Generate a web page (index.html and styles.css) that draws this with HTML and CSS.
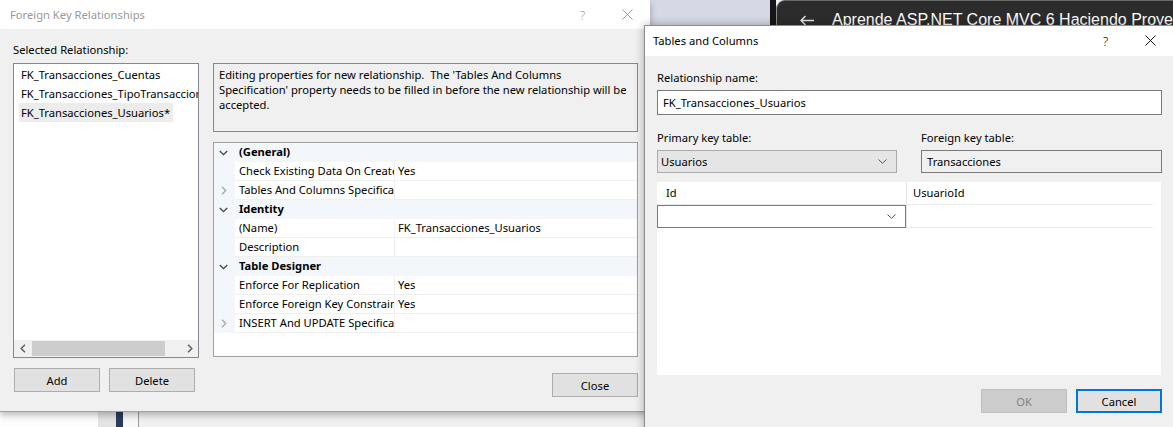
FILE: index.html
```html
<!DOCTYPE html>
<html>
<head>
<meta charset="utf-8">
<title>Foreign Key Relationships</title>
<link rel="stylesheet" href="styles.css">
</head>
<body>
<div class="desktop">
  <div class="top-band">
    <div class="tb-covered"></div>
    <div class="tb-lav"></div>
    <div class="tb-black"></div>
    <div class="tb-panel">
      <svg class="back-arrow" width="14" height="11" viewBox="0 0 14 11"><path d="M1 5.5H14M5.5 1L1 5.5L5.5 10" fill="none" stroke="#e6e6e6" stroke-width="1.4"/></svg>
      <span class="course">Aprende ASP.NET Core MVC 6 Haciendo Proyectos</span>
    </div>
  </div>
  <div class="bottom-band">
    <div class="bb-a"></div><div class="bb-b"></div><div class="bb-c"></div><div class="bb-d"></div><div class="bb-e"></div><div class="bb-f"></div>
  </div>

  <div class="dlg dlg-fk">
    <div class="titlebar">
      <div class="title">Foreign Key Relationships</div>
      <div class="tbtn help">?</div>
      <div class="tbtn"><svg width="11" height="11" viewBox="0 0 11 11"><path d="M0.5 0.5L10.5 10.5M10.5 0.5L0.5 10.5" stroke="#9a9a9a" stroke-width="1"/></svg></div>
    </div>
    <div class="fk-body">
      <div class="col left-col">
        <div class="label">Selected Relationship:</div>
        <div class="listbox">
          <div class="list-items">
            <div class="list-item">FK_Transacciones_Cuentas</div>
            <div class="list-item">FK_Transacciones_TipoTransacciones</div>
            <div class="list-item sel">FK_Transacciones_Usuarios*</div>
          </div>
          <div class="hscroll">
            <div class="sb-arrow"><svg width="6" height="9" viewBox="0 0 6 9"><path d="M5 0.8L1.2 4.5L5 8.2" fill="none" stroke="#606060" stroke-width="1.5"/></svg></div>
            <div class="sb-track"><div class="sb-thumb"></div></div>
            <div class="sb-arrow"><svg width="6" height="9" viewBox="0 0 6 9"><path d="M1 0.8L4.8 4.5L1 8.2" fill="none" stroke="#606060" stroke-width="1.5"/></svg></div>
          </div>
        </div>
        <div class="btn-row">
          <button class="btn">Add</button>
          <button class="btn">Delete</button>
        </div>
      </div>
      <div class="col right-col">
        <div class="desc">Editing properties for new relationship.&nbsp; The 'Tables And Columns<br>Specification' property needs to be filled in before the new relationship will be<br>accepted.</div>
        <div class="pgrid">
          <div class="prow cat">
            <div class="gut"><svg width="9" height="6" viewBox="0 0 9 6"><path d="M0.8 1L4.5 4.7L8.2 1" fill="none" stroke="#444" stroke-width="1.3"/></svg></div>
            <div class="cat-name">(General)</div>
          </div>
          <div class="prow">
            <div class="gut"></div>
            <div class="pname">Check Existing Data On Create Or Re-Enabling</div>
            <div class="pval">Yes</div>
          </div>
          <div class="prow">
            <div class="gut"><svg width="6" height="9" viewBox="0 0 6 9"><path d="M1 0.8L4.7 4.5L1 8.2" fill="none" stroke="#a9a9a9" stroke-width="1.3"/></svg></div>
            <div class="pname">Tables And Columns Specification</div>
            <div class="pval"></div>
          </div>
          <div class="prow cat">
            <div class="gut"><svg width="9" height="6" viewBox="0 0 9 6"><path d="M0.8 1L4.5 4.7L8.2 1" fill="none" stroke="#444" stroke-width="1.3"/></svg></div>
            <div class="cat-name">Identity</div>
          </div>
          <div class="prow">
            <div class="gut"></div>
            <div class="pname">(Name)</div>
            <div class="pval">FK_Transacciones_Usuarios</div>
          </div>
          <div class="prow">
            <div class="gut"></div>
            <div class="pname">Description</div>
            <div class="pval"></div>
          </div>
          <div class="prow cat">
            <div class="gut"><svg width="9" height="6" viewBox="0 0 9 6"><path d="M0.8 1L4.5 4.7L8.2 1" fill="none" stroke="#444" stroke-width="1.3"/></svg></div>
            <div class="cat-name">Table Designer</div>
          </div>
          <div class="prow">
            <div class="gut"></div>
            <div class="pname">Enforce For Replication</div>
            <div class="pval">Yes</div>
          </div>
          <div class="prow">
            <div class="gut"></div>
            <div class="pname">Enforce Foreign Key Constraint</div>
            <div class="pval">Yes</div>
          </div>
          <div class="prow">
            <div class="gut"><svg width="6" height="9" viewBox="0 0 6 9"><path d="M1 0.8L4.7 4.5L1 8.2" fill="none" stroke="#a9a9a9" stroke-width="1.3"/></svg></div>
            <div class="pname">INSERT And UPDATE Specification</div>
            <div class="pval"></div>
          </div>
        </div>
        <div class="close-row">
          <button class="btn">Close</button>
        </div>
      </div>
    </div>
  </div>

  <div class="dlg dlg-tc">
    <div class="titlebar">
      <div class="title">Tables and Columns</div>
      <div class="tbtn help">?</div>
      <div class="tbtn"><svg width="11" height="11" viewBox="0 0 11 11"><path d="M0.5 0.5L10.5 10.5M10.5 0.5L0.5 10.5" stroke="#111" stroke-width="1"/></svg></div>
    </div>
    <div class="tc-body">
      <div class="label lbl-gap">Relationship name:</div>
      <div class="textbox">FK_Transacciones_Usuarios</div>
      <div class="pk-row">
        <div class="col">
          <div class="label lbl-gap">Primary key table:</div>
          <div class="combo"><span>Usuarios</span><svg width="9" height="5" viewBox="0 0 9 5"><path d="M0.5 0.5L4.5 4.3L8.5 0.5" fill="none" stroke="#555" stroke-width="1"/></svg></div>
        </div>
        <div class="col">
          <div class="label lbl-gap">Foreign key table:</div>
          <div class="ro-box">Transacciones</div>
        </div>
      </div>
      <div class="cgrid">
        <div class="cg-row cg-head">
          <div class="cg-cell first">Id</div>
          <div class="cg-cell second">UsuarioId</div>
        </div>
        <div class="cg-row">
          <div class="cg-cell first cg-combo"><svg width="9" height="5" viewBox="0 0 9 5"><path d="M0.5 0.5L4.5 4.3L8.5 0.5" fill="none" stroke="#555" stroke-width="1"/></svg></div>
          <div class="cg-cell second"></div>
        </div>
      </div>
      <div class="tc-buttons">
        <button class="btn disabled">OK</button>
        <button class="btn default">Cancel</button>
      </div>
    </div>
  </div>
</div>
</body>
</html>
```

FILE: styles.css
```css
* { box-sizing: border-box; }
html, body { margin: 0; padding: 0; }
body {
  width: 1173px;
  height: 427px;
  overflow: hidden;
  font-family: "Noto Sans", "Open Sans", sans-serif;
  font-size: 11.2px;
  color: #000;
}

.desktop {
  position: relative;
  width: 1173px;
  height: 427px;
  background: #f0f0f0;
  display: flex;
  flex-direction: column;
  justify-content: space-between;
  overflow: hidden;
}

/* background behind the dialogs */
.top-band { height: 26px; display: flex; }
.tb-covered { width: 650px; background: #fff; }
.tb-lav { width: 120px; background: #d6d9e5; }
.tb-black { width: 6px; background: #161616; }
.tb-panel {
  flex: 1;
  background: #2c2c2c;
  border-top-left-radius: 9px;
  border-left: 1px solid #8a8a8a;
  border-top: 1px solid #6a6a6a;
  display: flex;
  align-items: flex-start;
  padding: 10px 0 0 23px;
  overflow: hidden;
  white-space: nowrap;
  color: #fff;
  font-family: "Liberation Sans", Arial, sans-serif;
  font-size: 16px;
  line-height: 18px;
}
.back-arrow { margin-top: 4px; flex: none; }
.course { margin-left: 18px; }

.bottom-band { height: 15px; display: flex; }
.bb-a { width: 98px; background: #fdfdfd; }
.bb-b { width: 18px; background: #e4e4e4; }
.bb-c { width: 7px; background: #2a3b5d; }
.bb-d { width: 15px; background: #f8f8f8; }
.bb-e { width: 1px; background: #9a9a9a; }
.bb-f { flex: 1; background: #f0f0f0; }

/* dialogs */
.dlg { position: absolute; background: #f0f0f0; }
.titlebar { display: flex; align-items: center; background: #fff; }
.title { flex: 1; white-space: nowrap; }
.tbtn {
  width: 45px;
  height: 100%;
  display: flex;
  align-items: center;
  justify-content: center;
  font-size: 13px;
}
.help { font-weight: 300; }

.dlg-fk {
  left: 0;
  top: 0;
  width: 650px;
  height: 412px;
  border-bottom: 1px solid #a0a0a0;
  box-shadow: 0 3px 7px rgba(0, 0, 0, 0.28);
}
.dlg-fk .titlebar { height: 29px; padding-left: 10px; color: #999; }
.dlg-fk .tbtn { color: #9a9a9a; }

.fk-body {
  display: grid;
  grid-template-columns: 186px 425px;
  column-gap: 14px;
  padding: 13px 0 0 13px;
}
.col { display: flex; flex-direction: column; }
.label { height: 15px; line-height: 15px; white-space: nowrap; }
.left-col .label { margin-bottom: 6px; }

.listbox {
  height: 295px;
  border: 1px solid #828790;
  background: #fff;
  display: flex;
  flex-direction: column;
}
.list-items { flex: 1; padding: 1px 0 0 5px; overflow: hidden; }
.list-item {
  height: 19px;
  line-height: 19px;
  white-space: nowrap;
  padding: 0 3px 0 2px;
  width: max-content;
}
.list-item.sel { background: #ececec; }

.hscroll { height: 17px; background: #f0f0f0; display: flex; }
.sb-arrow { width: 17px; height: 17px; display: flex; align-items: center; justify-content: center; }
.sb-track { flex: 1; padding: 1px 0; display: flex; }
.sb-thumb { width: 133px; margin-left: 1px; background: #cdcdcd; }

.btn-row { margin-top: 10px; padding-left: 1px; display: flex; gap: 9px; }
.btn {
  width: 86px;
  height: 24px;
  padding: 0;
  margin: 0;
  background: #e1e1e1;
  border: 1px solid #adadad;
  font: inherit;
  color: #000;
  display: flex;
  align-items: center;
  justify-content: center;
}

.right-col { padding-top: 21px; }
.desc {
  height: 69px;
  border: 1px solid #828790;
  background: #f0f0f0;
  padding: 3px 5px;
  line-height: 15px;
  white-space: nowrap;
  overflow: hidden;
}
.pgrid {
  margin-top: 10px;
  height: 215px;
  border: 1px solid #a0a0a0;
  background: #fff;
}
.prow {
  display: grid;
  grid-template-columns: 21px 160px 1fr;
  height: 19px;
  line-height: 18px;
}
.gut {
  background: #f3f6fb;
  display: flex;
  align-items: center;
  justify-content: center;
  padding-right: 2px;
}
.pname, .pval {
  white-space: nowrap;
  overflow: hidden;
  border-bottom: 1px solid #f0f0f0;
}
.pname { padding-left: 4px; border-right: 1px solid #f0f0f0; }
.pval { padding-left: 3px; }
.prow.cat { background: #f3f6fb; }
.cat-name { grid-column: 2 / 4; padding-left: 4px; font-weight: 700; }

.close-row { margin-top: 16px; display: flex; justify-content: flex-end; }

/* tables and columns dialog */
.dlg-tc {
  left: 644px;
  top: 25px;
  width: 530px;
  height: 410px;
  border: 1px solid #8c8c8c;
  border-bottom: 0;
  box-shadow: 0 0 9px rgba(0, 0, 0, 0.3);
}
.dlg-tc .titlebar { height: 30px; padding-left: 8px; padding-bottom: 1px; }
.tc-body { padding: 14px 11px 0 12px; display: flex; flex-direction: column; }
.lbl-gap { margin-bottom: 5px; }
.textbox {
  height: 25px;
  border: 1px solid #7a7a7a;
  background: #fff;
  padding-left: 5px;
  line-height: 23px;
}
.pk-row {
  margin-top: 15px;
  display: grid;
  grid-template-columns: 240px 1fr;
  column-gap: 24px;
}
.combo {
  height: 23px;
  background: #e5e5e5;
  border: 1px solid #acacac;
  padding: 0 9px 0 3px;
  display: flex;
  align-items: center;
  justify-content: space-between;
}
.ro-box {
  height: 23px;
  background: #f0f0f0;
  border: 1px solid #7a7a7a;
  padding-left: 5px;
  line-height: 21px;
}
.cgrid { margin-top: 9px; height: 193px; background: #fff; margin-right: 1px; }
.cg-row { display: grid; grid-template-columns: 249px 247px; height: 23px; }
.cg-cell { line-height: 22px; white-space: nowrap; border-bottom: 1px solid #ebebeb; }
.cg-head .first { padding-left: 9px; }
.cg-cell.second { padding-left: 6px; border-left: 1px solid #e3e3e3; }
.cg-combo {
  border: 1px solid #7a7a7a;
  display: flex;
  align-items: center;
  justify-content: flex-end;
  padding-right: 9px;
}
.tc-buttons { margin-top: 14px; display: flex; justify-content: flex-end; gap: 9px; }
.btn.disabled { background: #cccccc; border-color: #bfbfbf; color: #838383; }
.btn.default { border: 2px solid #0078d7; }
```
